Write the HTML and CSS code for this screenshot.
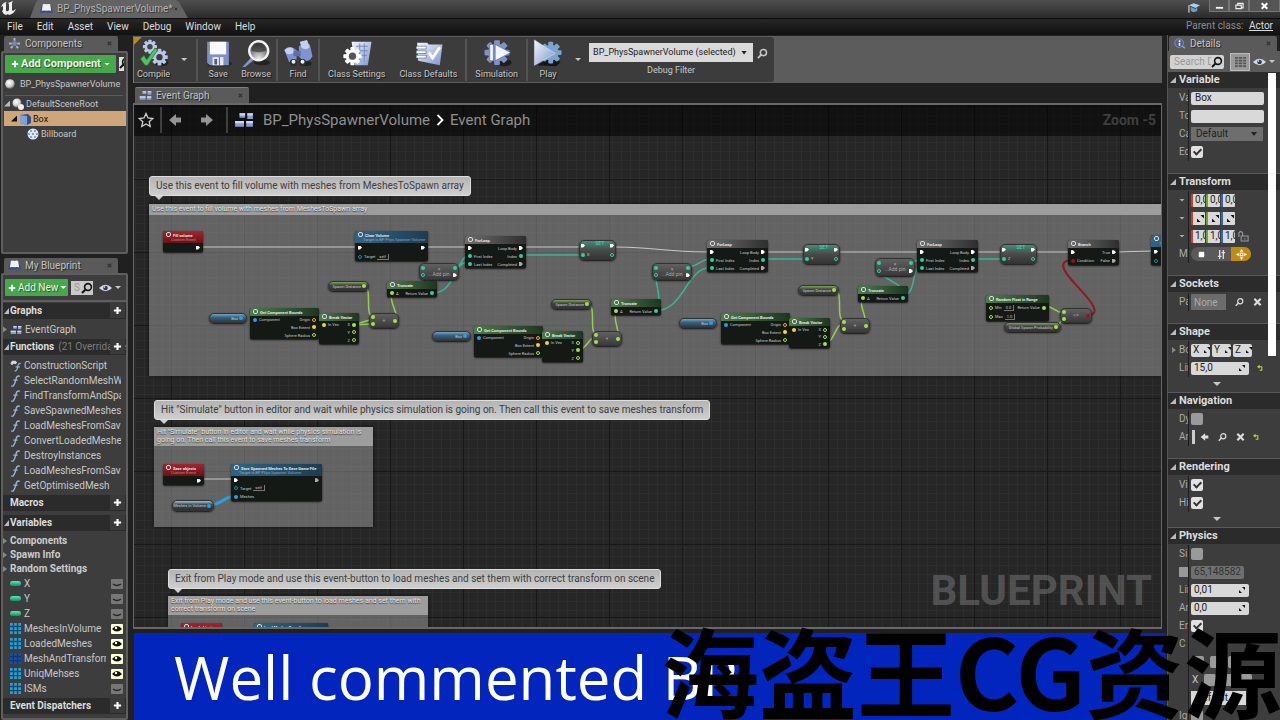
FILE: index.html
```html
<!DOCTYPE html>
<html lang="en">
<head>
  <meta charset="UTF-8" />
  <meta name="viewport" content="width=device-width, initial-scale=1.0" />
  <title>BP_PhysSpawnerVolume</title>
  <link rel="stylesheet" href="styles.css">
</head>
<body>

<svg class="sprite" aria-hidden="true">
  <defs>
    <linearGradient id="steel" x1="0" y1="0" x2="1" y2="1">
      <stop offset="0" stop-color="#f2f5ff"/><stop offset="1" stop-color="#7f95c8"/>
    </linearGradient>
    <radialGradient id="ball" cx=".4" cy=".35" r=".7">
      <stop offset="0" stop-color="#fff"/><stop offset=".6" stop-color="#d0d0d0"/><stop offset="1" stop-color="#555"/>
    </radialGradient>
    <radialGradient id="lens" cx=".5" cy=".9" r=".9">
      <stop offset="0" stop-color="#e8e8e8"/><stop offset="1" stop-color="#2c2c2c"/>
    </radialGradient>
  </defs>
  <symbol id="i-gear" viewBox="-12 -12 24 24">
    <g fill="inherit">
      <rect x="-2.5" y="-11" width="5" height="22" rx="1"/>
      <rect x="-2.5" y="-11" width="5" height="22" rx="1" transform="rotate(45)"/>
      <rect x="-2.5" y="-11" width="5" height="22" rx="1" transform="rotate(90)"/>
      <rect x="-2.5" y="-11" width="5" height="22" rx="1" transform="rotate(135)"/>
      <circle r="8"/>
    </g>
  </symbol>
  <symbol id="i-compile" viewBox="0 0 32 32">
    <ellipse cx="24" cy="26" rx="8" ry="4" fill="#111" opacity=".6"/>
    <g fill="#b9c7ea"><use href="#i-gear" x="3" y="0" width="17" height="17"/><use href="#i-gear" x="12" y="10" width="20" height="20"/></g>
    <circle cx="11.500" cy="8.500" r="3" fill="#444"/><circle cx="22" cy="20" r="3.500" fill="#3c3c3c"/>
    <path d="M1 22l4-4 3 5 9-13 3 2L9 29H6z" fill="#52c15a" stroke="#276e2c" stroke-width=".7"/>
  </symbol>
  <symbol id="i-save" viewBox="0 0 32 32">
    <path d="M4 30h24l4-3-4-3H8z" fill="#111" opacity=".5"/>
    <path d="M4 3h24v26H7l-3-3z" fill="#7d8fc4"/><path d="M7 3h18v14H7z" fill="#fafafa"/>
    <path d="M10 20h12v9H10z" fill="#e7e9f2"/><path d="M12 22h3v6h-3zM17 20h1v9h-1z" fill="#4c5a86"/>
  </symbol>
  <symbol id="i-browse" viewBox="0 0 32 32">
    <ellipse cx="23" cy="26" rx="9" ry="3" fill="#111" opacity=".6"/>
    <path d="M11 20l3 3L4 31l-3 0z" fill="#8296cf"/>
    <circle cx="19" cy="13" r="10.5" fill="url(#lens)" stroke="#f3f3f8" stroke-width="2.6"/>
    <path d="M11 13a8 8 0 0 1 16 0q-8 3-16 0z" fill="#2b2b2b" opacity=".6"/>
  </symbol>
  <symbol id="i-find" viewBox="0 0 32 32">
    <ellipse cx="24" cy="27" rx="7" ry="3" fill="#111" opacity=".6"/>
    <path d="M1 12q4-5 10-2l4 3-1 12q-5 3-8 0zM17 8q5-5 12-2l3 13q-3 6-10 6l-5-6z" fill="#7f94cf"/>
    <path d="M18 3l8-2 3 8q-4 4-9 1zM1 12q5-4 9-2l2 5q-5 3-9 1z" fill="#c4d0f0"/>
    <path d="M11 13h8v6h-8z" fill="#5d70a5"/>
    <circle cx="11" cy="26" r="4" fill="#2c2c2c"/><circle cx="21" cy="26" r="4" fill="#2c2c2c"/><circle cx="11" cy="25" r="2.200" fill="#eee"/><circle cx="21" cy="25" r="2.200" fill="#eee"/>
  </symbol>
  <symbol id="i-settings" viewBox="0 0 32 32">
    <path d="M10 3h22l-4 26H14z" fill="url(#steel)"/>
    <path d="M15 8h13M15 13h13M15 18h12M19 5v20M24 5v20" stroke="#6f86be" stroke-width="1"/>
    <g fill="#fff"><use href="#i-gear" x="0" y="8" width="22" height="22"/></g><circle cx="11" cy="19" r="4" fill="#555"/>
  </symbol>
  <symbol id="i-defaults" viewBox="0 0 32 32">
    <path d="M4 4h11l2 2h15l-3 23-24-5z" fill="url(#steel)"/>
    <path d="M3 8h11v3H3zM3 13h11v3H3zM3 18h11v3H3z" fill="#fff" stroke="#44527c" stroke-width=".6"/>
    <path d="M17 15l4 6 8-12" fill="none" stroke="#fff" stroke-width="3"/>
  </symbol>
  <symbol id="i-sim" viewBox="0 0 32 32">
    <ellipse cx="24" cy="26" rx="8" ry="4" fill="#111" opacity=".7"/>
    <g fill="#7f93c6"><use href="#i-gear" x="1" y="0" width="30" height="30"/></g>
    <path d="M8 6h4v18H8zM14 6l17 9-17 9z" fill="#f2f5ff" stroke="#53648f" stroke-width=".7"/>
  </symbol>
  <symbol id="i-play" viewBox="0 0 32 32">
    <path d="M4 29l14-8 12 4-5 5z" fill="#0b0b0b" opacity=".8"/>
    <g fill="#7aa5cf"><use href="#i-gear" x="6" y="1" width="26" height="28"/></g>
    <path d="M1 1l23 15L1 29z" fill="url(#steel)" stroke="#dfe6fb" stroke-width=".6"/>
  </symbol>
  <symbol id="i-mag" viewBox="0 0 12 12">
    <path d="M1 11l4-4" stroke="currentColor" stroke-width="2"/><circle cx="7" cy="5" r="3.4" fill="none" stroke="currentColor" stroke-width="1.6"/>
  </symbol>
  <symbol id="i-graph" viewBox="0 0 18 14">
    <path d="M5 1h5v4H5zM12 1h5v5h-5zM1 8h8v5H1zM11 8h6v5h-6z" fill="#8d9dd0"/><path d="M5 1h5v2H5zM12 1h5v2h-5zM1 8h8v2H1zM11 8h6v2h-6z" fill="#ccd6f5"/>
  </symbol>
  <symbol id="i-book" viewBox="0 0 14 12">
    <path d="M0 10L2 2h10l2 8z" fill="#2f4f92"/><path d="M2 8l1-7q2-1 4 0 2-1 4 0l1 7q-3-1-5 0-2-1-5 0z" fill="#f1f1f1"/>
  </symbol>
  <symbol id="i-comp" viewBox="0 0 14 12">
    <path d="M7 0v3M1 6h3M10 6h3M3 11l2-2M11 11l-2-2" stroke="#a8b7cf" stroke-width="2"/><circle cx="7" cy="6" r="2.6" fill="#6f8bc0"/>
  </symbol>
  <symbol id="i-info" viewBox="0 0 14 14">
    <circle cx="6.500" cy="6.500" r="5.500" fill="#4c5d92" stroke="#8c9bc5"/><path d="M6 6h2v4H6zM6 3h2v2H6z" fill="#fff"/><path d="M10 10l4 3" stroke="#8c9bc5" stroke-width="2"/>
  </symbol>
  <symbol id="i-eye" viewBox="0 0 14 8">
    <path d="M0 4q7-7 14 0-7 7-14 0z" fill="#d7d9e4"/><circle cx="7" cy="4" r="2.500" fill="#2d3a5c"/><circle cx="6" cy="3" r=".8" fill="#fff"/>
  </symbol>
  <symbol id="i-func" viewBox="0 0 12 14">
    <path d="M11 1.500Q7.500 0 6.500 5T3.500 12.500Q2.500 13.500 1 12.500M3.500 6h5" fill="none" stroke="#9db6d8" stroke-width="1.600"/>
  </symbol>
  <symbol id="i-construct" viewBox="0 0 12 14">
    <path d="M0 4l2-3h4l2 2-2 2-2-1-2 2z" fill="#d3d9e6"/><path d="M12 4Q9 3.500 8.500 8T5 13M6 8h5" fill="none" stroke="#9db6d8" stroke-width="1.300"/>
  </symbol>
  <symbol id="i-grid" viewBox="0 0 12 12">
    <path d="M0 0h3v3H0zM4.500 0h3v3h-3zM9 0h3v3H9zM0 4.500h3v3H0zM4.500 4.500h3v3h-3zM9 4.500h3v3H9zM0 9h3v3H0zM4.500 9h3v3h-3zM9 9h3v3H9z" fill="currentColor"/>
  </symbol>
  <symbol id="i-rows" viewBox="0 0 12 12">
    <path d="M0 1h3v2H0zM4 1h4v2H4zM9 1h3v2H9zM0 4h3v2H0zM4 4h4v2H4zM9 4h3v2H9zM0 7h3v2H0zM4 7h4v2H4zM9 7h3v2H9zM0 10h3v2H0zM4 10h4v2H4zM9 10h3v2H9z" fill="currentColor"/>
  </symbol>
  <symbol id="i-closed" viewBox="0 0 12 10"><path d="M2 5q4 3 8 0" fill="none" stroke="#252525" stroke-width="1.300"/></symbol>
  <symbol id="i-open" viewBox="0 0 12 10"><path d="M1 5q5-6 10 0-5 5-10 0z" fill="#111"/><circle cx="5" cy="4" r="1.200" fill="#ffffcf"/></symbol>
  <symbol id="i-x" viewBox="0 0 10 10"><path d="M1.500 1.500l7 7M8.500 1.500l-7 7" stroke="currentColor" stroke-width="2.400"/></symbol>
  <symbol id="i-plus" viewBox="0 0 10 10"><path d="M5 1v8M1 5h8" stroke="currentColor" stroke-width="2.400"/></symbol>
  <symbol id="i-arrow" viewBox="0 0 14 14"><path d="M1 7l7-6v3.500h5v5H8V13z" fill="currentColor"/></symbol>
  <symbol id="i-star" viewBox="0 0 16 16"><path d="M8 1.500l2 4.500 4.800.5-3.600 3.200 1 4.800L8 12l-4.200 2.500 1-4.800L1.200 6.500 6 6z" fill="none" stroke="#cfcfcf" stroke-width="1.300"/></symbol>
  <symbol id="i-reset" viewBox="0 0 8 8"><path d="M1 2h4.500v4H3M3 .5L1 2l2 1.500" fill="none" stroke="#c3cf3a" stroke-width="1.200"/></symbol>
  <symbol id="i-spin" viewBox="0 0 8 8"><path d="M4 0h4v4zM0 4v4h4z" fill="#111"/></symbol>
  <symbol id="i-lock" viewBox="0 0 12 12"><path d="M1 7V2.500Q3 0 5 2.500V6" fill="none" stroke="#999" stroke-width="1.200"/><path d="M3.500 6H11v5.500H3.500z" fill="none" stroke="#999" stroke-width="1.200"/><path d="M7 8h1v2H7z" fill="#999"/></symbol>
</svg>

<header class="titlebar">
  <svg class="unreal" viewBox="0 0 18 16" aria-hidden="true"><path d="M1 7q2-5 6-5-2 1-1 2v6q0 2 2 1l1-1V4L8 3l5-2-1 2v7l1 1 3-2q-2 5-7 6l-1-1-2 1Q3 14 2 11l1-1V6z" fill="#eee"/></svg>
  <div class="doc-tab"><svg class="ico-book"><use href="#i-book"/></svg><span>BP_PhysSpawnerVolume*</span><svg class="tab-x"><use href="#i-x"/></svg></div>
  <svg class="hat" viewBox="0 0 14 12" aria-hidden="true"><path d="M1 3l5-2 7 2-5 3z" fill="#a8cdf0"/><path d="M3 5v4q3 3 7 0V5L8 7z" fill="#6b9ccc"/><path d="M1 3v8" stroke="#bbb" stroke-width="1.500"/></svg>
  <div class="win-btns">
    <button aria-label="Minimize"><svg viewBox="0 0 10 8"><path d="M1 6h8" stroke="#fff" stroke-width="2"/></svg></button>
    <button aria-label="Restore"><svg viewBox="0 0 10 8"><path d="M3 3V1h6v5H7M1 3h6v4H1z" fill="none" stroke="#eee" stroke-width="1.300"/></svg></button>
    <button aria-label="Close"><svg viewBox="0 0 10 10"><use href="#i-x"/></svg></button>
  </div>
</header>

<nav class="menubar">
  <button>File</button><button>Edit</button><button>Asset</button><button>View</button><button>Debug</button><button>Window</button><button>Help</button>
  <span class="parent-class">Parent class: <a href="#">Actor</a></span>
</nav>

<div class="workspace">

  <aside class="left">
    <div class="tab"><svg class="tab-ico"><use href="#i-comp"/></svg><span>Components</span><svg class="tab-x"><use href="#i-x"/></svg></div>
    <section class="panel components">
      <div class="add-row">
        <button class="btn-green btn-add"><svg class="plus"><use href="#i-plus"/></svg>Add Component<i class="caret"></i></button>
        <div class="search-stub"><svg><use href="#i-mag"/></svg></div>
      </div>
      <div class="tree-root"><svg viewBox="0 0 10 10"><circle cx="5" cy="5" r="4.800" fill="url(#ball)"/></svg>BP_PhysSpawnerVolume</div>
      <ul class="tree">
        <li><i class="tri"></i><svg viewBox="0 0 12 12"><circle cx="5" cy="5" r="4.500" fill="url(#ball)"/><circle cx="9" cy="9" r="3" fill="#eee"/></svg>DefaultSceneRoot</li>
        <li class="lvl1 selected"><i class="tri"></i><svg viewBox="0 0 12 12"><path d="M1 2l8-1 3 3v6l-4 2-7-2z" fill="#35507f"/><path d="M1 2l7 1v9l-7-2z" fill="#7ea0dc"/></svg>Box</li>
        <li class="lvl2"><svg viewBox="0 0 12 12"><circle cx="6" cy="6" r="5.500" fill="#dfe9f5"/><path d="M3 2h2v2H3zM7 2h2v2H7zM1 5h2v2H1zM5 5h2v2H5zM9 5h2v2H9zM3 8h2v2H3zM7 8h2v2H7z" fill="#7ea5d3"/></svg>Billboard</li>
      </ul>
    </section>

    <div class="tab tab-second"><svg class="tab-ico"><use href="#i-book"/></svg><span>My Blueprint</span><svg class="tab-x"><use href="#i-x"/></svg></div>
    <section class="panel my-blueprint">
      <div class="add-row bp-tools">
        <button class="btn-green"><svg class="plus"><use href="#i-plus"/></svg>Add New<i class="caret"></i></button>
        <div class="mini-search"><span>S</span><svg><use href="#i-mag"/></svg></div>
        <svg class="eye"><use href="#i-eye"/></svg><i class="caret"></i>
      </div>
      <h3 class="cat"><i class="tri"></i>Graphs<button aria-label="Add graph"><svg><use href="#i-plus"/></svg></button></h3>
      <ul class="items graphs">
        <li><i class="tri-r"></i><svg><use href="#i-graph"/></svg><span>EventGraph</span></li>
      </ul>
      <h3 class="cat"><i class="tri"></i>Functions<small>(21 Overridable)</small><button aria-label="Add function"><svg><use href="#i-plus"/></svg></button></h3>
      <ul class="items">
        <li><svg><use href="#i-construct"/></svg><span>ConstructionScript</span></li>
        <li><svg><use href="#i-func"/></svg><span>SelectRandomMeshW</span></li>
        <li><svg><use href="#i-func"/></svg><span>FindTransformAndSpa</span></li>
        <li><svg><use href="#i-func"/></svg><span>SaveSpawnedMeshes</span></li>
        <li><svg><use href="#i-func"/></svg><span>LoadMeshesFromSav</span></li>
        <li><svg><use href="#i-func"/></svg><span>ConvertLoadedMeshe</span></li>
        <li><svg><use href="#i-func"/></svg><span>DestroyInstances</span></li>
        <li><svg><use href="#i-func"/></svg><span>LoadMeshesFromSav</span></li>
        <li><svg><use href="#i-func"/></svg><span>GetOptimisedMesh</span></li>
      </ul>
      <h3 class="cat">Macros<button aria-label="Add macro"><svg><use href="#i-plus"/></svg></button></h3>
      <h3 class="cat"><i class="tri"></i>Variables<button aria-label="Add variable"><svg><use href="#i-plus"/></svg></button></h3>
      <ul class="groups">
        <li><i class="tri-r"></i>Components</li>
        <li><i class="tri-r"></i>Spawn Info</li>
        <li><i class="tri-r"></i>Random Settings</li>
      </ul>
      <ul class="items vars">
        <li><i class="capsule"></i><span>X</span><svg class="vis"><use href="#i-closed"/></svg></li>
        <li><i class="capsule"></i><span>Y</span><svg class="vis"><use href="#i-closed"/></svg></li>
        <li><i class="capsule"></i><span>Z</span><svg class="vis"><use href="#i-closed"/></svg></li>
        <li><svg class="array"><use href="#i-grid"/></svg><span>MeshesInVolume</span><svg class="vis on"><use href="#i-open"/></svg></li>
        <li><svg class="array"><use href="#i-grid"/></svg><span>LoadedMeshes</span><svg class="vis on"><use href="#i-open"/></svg></li>
        <li><svg class="array deep"><use href="#i-grid"/></svg><span>MeshAndTransform</span><svg class="vis on"><use href="#i-open"/></svg></li>
        <li><svg class="array"><use href="#i-grid"/></svg><span>UniqMehses</span><svg class="vis on"><use href="#i-open"/></svg></li>
        <li><svg class="array"><use href="#i-grid"/></svg><span>ISMs</span><svg class="vis"><use href="#i-closed"/></svg></li>
      </ul>
      <h3 class="cat">Event Dispatchers<button aria-label="Add dispatcher"><svg><use href="#i-plus"/></svg></button></h3>
    </section>
  </aside>

  <main class="center">
    <div class="toolbar">
      <div class="tools">
        <button class="tool"><svg><use href="#i-compile"/></svg>Compile</button>
        <i class="caret drop"></i>
        <i class="sep"></i>
        <button class="tool"><svg><use href="#i-save"/></svg>Save</button>
        <button class="tool"><svg><use href="#i-browse"/></svg>Browse</button>
        <i class="sep"></i>
        <button class="tool"><svg><use href="#i-find"/></svg>Find</button>
        <i class="sep"></i>
        <button class="tool tool-wide"><svg><use href="#i-settings"/></svg>Class Settings</button>
        <button class="tool tool-wide"><svg><use href="#i-defaults"/></svg>Class Defaults</button>
        <i class="sep"></i>
        <button class="tool tool-wide"><svg><use href="#i-sim"/></svg>Simulation</button>
        <i class="sep"></i>
        <button class="tool"><svg><use href="#i-play"/></svg>Play</button>
        <i class="caret drop"></i>
        <div class="debug">
          <div class="debug-pick"><select id="debug-filter"><option>BP_PhysSpawnerVolume (selected)</option></select></div>
          <label for="debug-filter">Debug Filter</label>
        </div>
        <svg class="debug-mag"><use href="#i-mag"/></svg>
      </div>
    </div>

    <div class="tab graph-tab"><svg class="tab-ico"><use href="#i-graph"/></svg><span>Event Graph</span><svg class="tab-x"><use href="#i-x"/></svg></div>
    <section class="graph">
      <div class="crumbs">
        <svg class="star"><use href="#i-star"/></svg>
        <i class="bar"></i>
        <svg class="nav-arrow"><use href="#i-arrow"/></svg>
        <svg class="nav-arrow fwd"><use href="#i-arrow"/></svg>
        <i class="bar"></i>
        <svg class="crumb-ico"><use href="#i-graph"/></svg>
        <span>BP_PhysSpawnerVolume</span>
        <svg class="chev" viewBox="0 0 8 12"><path d="M1.500 1l5 5-5 5" fill="none" stroke="#fff" stroke-width="1.800"/></svg>
        <span>Event Graph</span>
        <b class="zoom">Zoom -5</b>
      </div>
      <div class="canvas" id="canvas"></div>
      <b class="stamp">BLUEPRINT</b>
    </section>

    <div class="banner">Well commented BP</div>
  </main>

  <aside class="right">
    <div class="tab"><svg class="tab-ico"><use href="#i-info"/></svg><span>Details</span><svg class="tab-x"><use href="#i-x"/></svg></div>
    <div class="details">
      <div class="search-row">
        <div class="search"><input type="text" placeholder="Search Details" aria-label="Search Details"><svg><use href="#i-mag"/></svg></div>
        <button class="matrix" aria-label="Property matrix"><svg><use href="#i-rows"/></svg></button>
        <svg class="eye"><use href="#i-eye"/></svg><i class="caret"></i>
      </div>

      <section class="props">
        <h3><i class="tri"></i>Variable</h3>
        <div class="row"><label for="v-name">Va</label><input class="wide" id="v-name" type="text" value="Box"></div>
        <div class="row"><label for="v-tip">To</label><input class="wide" id="v-tip" type="text"></div>
        <div class="row"><label for="v-cat">Ca</label><div class="pick"><select id="v-cat"><option>Default</option></select></div></div>
        <div class="row"><label for="v-ed">Ed</label><input id="v-ed" type="checkbox" checked></div>
      </section>
      <section class="props">
        <h3><i class="tri"></i>Transform</h3>
        <div class="row"><label><i class="caret"></i></label><div class="xyz"><input value="0,0" aria-label="Location X"><input value="0,0" aria-label="Location Y"><input value="0,0" aria-label="Location Z"></div></div>
        <div class="row"><label><i class="caret"></i></label><div class="xyz rot"><span><svg><use href="#i-spin"/></svg></span><span><svg><use href="#i-spin"/></svg></span><span><svg><use href="#i-spin"/></svg></span></div></div>
        <div class="row"><label><i class="caret"></i></label><div class="xyz"><input value="1,0" aria-label="Scale X"><input value="1,0" aria-label="Scale Y"><input value="1,0" aria-label="Scale Z"></div><svg class="lock"><use href="#i-lock"/></svg></div>
        <div class="row"><label>M</label>
          <div class="mobility">
            <button aria-label="Static"><svg viewBox="0 0 12 12"><rect x="3" y="3" width="6" height="6" rx="1" fill="#fff"/></svg></button>
            <button aria-label="Stationary"><svg viewBox="0 0 12 12"><path d="M4 1v10M8 1v10M2 8h4M6 4h4" stroke="#ddd" stroke-width="1.500"/></svg></button>
            <button class="on" aria-label="Movable"><svg viewBox="0 0 12 12"><path d="M6 0l2 3H4zM6 12l2-3H4zM0 6l3-2v4zM12 6L9 4v4z" fill="#fff"/><rect x="4.500" y="4.500" width="3" height="3" fill="none" stroke="#fff"/></svg></button>
          </div>
        </div>
      </section>
      <section class="props">
        <h3><i class="tri"></i>Sockets</h3>
        <div class="row"><label for="s-par">Pa</label><input class="none" id="s-par" type="text" value="None" disabled><svg class="act"><use href="#i-mag"/></svg><svg class="act"><use href="#i-x"/></svg></div>
      </section>
      <section class="props more">
        <h3><i class="tri"></i>Shape</h3>
        <div class="row"><i class="tri-r"></i><label>Bo</label><div class="ext"><span>X<svg><use href="#i-spin"/></svg></span><span>Y<svg><use href="#i-spin"/></svg></span><span>Z<svg><use href="#i-spin"/></svg></span></div></div>
        <div class="row"><label for="s-line">Lin</label><div class="num"><input id="s-line" type="text" value="15,0"><svg><use href="#i-spin"/></svg></div><svg class="reset"><use href="#i-reset"/></svg></div>
        <div class="expander"><i class="caret"></i></div>
      </section>
      <section class="props">
        <h3><i class="tri"></i>Navigation</h3>
        <div class="row"><label for="n-dyn">Dy</label><input id="n-dyn" type="checkbox"></div>
        <div class="row"><label>Ar</label><i class="sliver"></i><svg class="act tight"><use href="#i-arrow"/></svg><svg class="act"><use href="#i-mag"/></svg><svg class="act"><use href="#i-x"/></svg><svg class="reset"><use href="#i-reset"/></svg></div>
      </section>
      <section class="props more">
        <h3><i class="tri"></i>Rendering</h3>
        <div class="row"><label for="r-vis">Vi</label><input id="r-vis" type="checkbox" checked></div>
        <div class="row"><label for="r-hid">Hi</label><input id="r-hid" type="checkbox" checked></div>
        <div class="expander"><i class="caret"></i></div>
      </section>
      <section class="props">
        <h3><i class="tri"></i>Physics</h3>
        <div class="row"><label for="p-sim">Si</label><input id="p-sim" type="checkbox"></div>
        <div class="row"><label><i class="half"></i></label><div class="num off"><input type="text" value="65,148582" aria-label="Mass" disabled></div></div>
        <div class="row"><label for="p-lin">Lin</label><div class="num"><input id="p-lin" type="text" value="0,01"><svg><use href="#i-spin"/></svg></div></div>
        <div class="row"><label for="p-ang">Ar</label><div class="num"><input id="p-ang" type="text" value="0,0"><svg><use href="#i-spin"/></svg></div></div>
        <div class="row"><label for="p-en">En</label><input id="p-en" type="checkbox" checked></div>
        <div class="row"><label>C</label></div>
        <div class="row locks"><label></label><input type="checkbox" aria-label="Lock position X"><input type="checkbox" aria-label="Lock position Y"><input type="checkbox" aria-label="Lock position Z"></div>
        <div class="row locks"><label></label>X<input type="checkbox" aria-label="Lock rotation X"><input type="checkbox" aria-label="Lock rotation Y"><input type="checkbox" aria-label="Lock rotation Z"></div>
        <div class="row"><label></label><div class="pick light"><select aria-label="Mode"><option>Default</option></select></div></div>
        <div class="row"><label for="p-ig">Ig</label><input id="p-ig" type="checkbox"></div>
      </section>
      <i class="scroll-thumb"></i>
    </div>
  </aside>
</div>

<div class="watermark" lang="zh">海盗王CG资源</div>

<script src="graph.js"></script>
</body>
</html>
```

FILE: styles.css
```css
:root {
  --panel: #3d3d3d;
  --head: #2b2b2b;
  --frame: #5e5e5e;
  --bg: #202020;
  --text: #c8c8c8;
  --field: #d9d9d9;
  --green: #47a84b;
  --teal: #2fcf9f;
  --lime: #a4e04c;
  --blue: #2a9fdd;
}

* {
  margin: 0;
  padding: 0;
  box-sizing: border-box;
}

body {
  height: 100vh;
  overflow: hidden;
  display: flex;
  flex-direction: column;
  position: relative;
  background: var(--bg);
  color: var(--text);
  font: 10px/14px Roboto, sans-serif;
}

button, input, select {
  font: inherit;
  color: inherit;
  border: none;
  background: none;
}

ul { list-style: none; }
svg { flex: none; display: block; overflow: visible; }
i { flex: none; }
a { color: #eee; }
.sprite { position: absolute; width: 0; height: 0; }

.caret {
  width: 6px;
  height: 3px;
  background: currentColor;
  clip-path: polygon(0 0, 100% 0, 50% 100%);
}

.tri {
  width: 6px;
  height: 6px;
  background: #bbb;
  clip-path: polygon(100% 0, 100% 100%, 0 100%);
}

.tri-r {
  width: 4px;
  height: 6px;
  background: #888;
  clip-path: polygon(0 0, 100% 50%, 0 100%);
}

/* title bar and menu */
.titlebar {
  flex: none;
  height: 19px;
  display: flex;
  align-items: flex-start;
  background: linear-gradient(#4e4e4e, #2b2b2b);
  border-bottom: 1px solid #0c0c0c;
}

.unreal { width: 18px; height: 16px; }

.doc-tab {
  display: flex;
  align-items: center;
  width: 158px;
  height: 18px;
  margin-left: 12px;
  padding: 0 10px;
  background: #636363;
  color: #b4b4b4;
  clip-path: polygon(6px 2px, 8px 0, 146px 0, 149px 2px, 158px 100%, 0 100%);
  text-shadow: 1px 1px 1px #333;
}

.ico-book { width: 13px; height: 12px; margin-right: 4px; }
.tab-x { width: 5px; height: 5px; margin-left: auto; color: #333; }
.doc-tab .tab-x { width: 4px; height: 4px; margin-left: 1px; }
.hat { width: 13px; height: 12px; margin: 2px 8px 0 auto; }

.win-btns { display: flex; }

.win-btns button {
  width: 20px;
  height: 12px;
  display: flex;
  align-items: center;
  justify-content: center;
  background: #555;
  border: 1px solid #777;
  border-top: none;
  color: #fff;
}

.win-btns button:last-child { width: 31px; }
.win-btns svg { width: 9px; height: 8px; }

.menubar {
  flex: none;
  height: 16px;
  display: flex;
  gap: 14px;
  padding: 0 7px;
  background: linear-gradient(#262626, #111);
}

.menubar button { color: #ddd; }
.parent-class { margin-left: auto; color: #8c8c8c; }
.parent-class a { margin-left: 3px; color: #ddd; }

.workspace {
  flex: 1;
  min-height: 0;
  display: grid;
  grid-template-columns: 128px minmax(0, 1fr) 113px;
  column-gap: 5px;
}

/* tabs */
.tab {
  flex: none;
  height: 15px;
  width: 114px;
  margin-left: 4px;
  padding: 0 6px 0 4px;
  display: flex;
  align-items: center;
  background: #5a5a5a;
  color: #c4c4c4;
  border-radius: 2px 2px 0 0;
  line-height: 13px;
  text-shadow: 1px 1px 1px #222;
}

.tab-ico { width: 13px; height: 11px; margin-right: 4px; }

.left, .right, .center {
  min-height: 0;
  min-width: 0;
  display: flex;
  flex-direction: column;
  padding-top: 1px;
}

.left .tab-ico { margin-right: 4px; }

.panel {
  margin-left: 1px;
  border: 2px solid var(--frame);
  background: var(--panel);
  border-radius: 2px;
}

.components { height: 203px; flex: none; font-size: 9px; }
.tab-second { margin-top: 4px; }

.add-row {
  display: flex;
  align-items: center;
  gap: 3px;
  padding: 2px;
}

.btn-green {
  display: flex;
  align-items: center;
  height: 18px;
  padding: 0 3px;
  gap: 2px;
  background: var(--green);
  color: #f0f0f0;
  border-radius: 1px;
  white-space: nowrap;
  text-shadow: 1px 1px 1px #1d5a20;
}

.btn-green .caret { margin-left: auto; }
.btn-add { width: 112px; padding: 0 6px; font-size: 11px; font-weight: bold; }
.plus { width: 8px; height: 8px; }
.search-stub { width: 5px; height: 14px; overflow: hidden; background: #ddd; color: #111; }
.search-stub svg { width: 12px; height: 12px; }

.tree-root {
  display: flex;
  align-items: center;
  gap: 5px;
  height: 21px;
  margin: 0 3px 0 2px;
  padding-bottom: 2px;
  border-bottom: 1px solid #5b5b5b;
  white-space: nowrap;
}

.tree-root svg { width: 10px; height: 10px; }
.tree { padding: 0 0 0 1px; }

.tree li {
  display: flex;
  align-items: center;
  gap: 2px;
  height: 15px;
}

.tree svg { width: 12px; height: 12px; }
.tree .lvl1 { padding-left: 7px; }
.tree .lvl2 { padding-left: 23px; }
.tree .selected { background: #cda77a; color: #111; }
.selected .tri { background: #111; }

.my-blueprint { flex: 1; min-height: 0; overflow: hidden; }
.bp-tools { height: 27px; padding: 0 2px; border-bottom: 2px solid var(--frame); }
.bp-tools .btn-green { width: 63px; height: 17px; }
.eye { width: 13px; height: 8px; }

.mini-search {
  width: 22px;
  height: 14px;
  display: flex;
  align-items: center;
  justify-content: space-between;
  padding-left: 3px;
  background: #c9c9c9;
  color: #111;
}

.mini-search span { color: #999; }
.mini-search svg { width: 12px; height: 12px; }
.bp-tools .eye { margin-left: 3px; }

.cat {
  display: flex;
  align-items: center;
  height: 16px;
  margin: 1px 0 3px;
  padding: 0 1px 0 7px;
  background: var(--head);
  color: #ddd;
  font-size: 10px;
  white-space: nowrap;
  position: relative;
}

.items + .cat { margin-top: 2px; }
.cat + .cat { margin-top: 4px; }
.cat .tri { width: 5px; margin-left: -6px; margin-right: 1px; }
.cat small { margin-left: 4px; color: #7d7d7d; font-size: 10px; font-weight: normal; }

.cat button {
  position: absolute;
  right: 1px;
  top: 0;
  width: 15px;
  height: 15px;
  display: flex;
  align-items: center;
  justify-content: center;
  background: #3a3a3a;
  color: #fff;
}

.cat button svg { width: 9px; height: 9px; }

.items li {
  display: flex;
  align-items: center;
  height: 15px;
  padding-left: 7px;
}

.items svg { width: 11px; height: 12px; margin-right: 3px; }
.items span { width: 97px; overflow: hidden; white-space: nowrap; }
.graphs li { padding-left: 0; }
.graphs .tri-r { margin-right: 3px; }
.graphs svg { width: 12px; }
.groups li { height: 14px; display: flex; align-items: center; gap: 3px; font-weight: bold; color: #ccc; }
.vars span { width: 82px; }

.capsule {
  width: 11px;
  height: 5px;
  margin-right: 3px;
  border-radius: 3px;
  background: linear-gradient(#5be8b8, #0d8f68);
}

.items .array { height: 11px; color: #2a9fd0; background: #174a66; }
.items .deep { color: #1450a8; background: #123672; }
.items .vis { width: 12px; height: 10px; margin: 0 0 0 5px; background: #777; border-radius: 1px; }
.items .on { background: #ffffcf; }

/* toolbar */
.toolbar {
  flex: none;
  height: 47px;
  padding: 1px 0;
  background: #5c5c5c;
  border-left: 1px solid #777;
}

.tools {
  display: flex;
  align-items: center;
  width: 640px;
  height: 45px;
  background: linear-gradient(135deg, #b98a1c 5px, #3c3c3c 6px);
  border-radius: 0 3px 3px 0;
  font-size: 9px;
}

.tool {
  display: flex;
  flex-direction: column;
  align-items: center;
  min-width: 38px;
  padding: 0 3px;
  white-space: nowrap;
  text-shadow: 1px 1px 1px #111;
  line-height: 13px;
}

.tool svg { width: 30px; height: 29px; }
.tool-wide { padding: 0 7px; }
.drop { margin: 0 8px; }
.sep { width: 2px; height: 42px; background: #545454; margin: 0 1px; }

.debug {
  display: flex;
  flex-direction: column;
  align-items: center;
  gap: 1px;
}

.debug-pick { position: relative; }

.debug select {
  appearance: none;
  display: block;
  width: 164px;
  height: 19px;
  padding-left: 4px;
  background: #d9d9d9;
  color: #1a1a1a;
}

.debug-pick::after, .pick::after {
  content: '';
  position: absolute;
  right: 6px;
  top: 8px;
  width: 6px;
  height: 4px;
  background: #222;
  clip-path: polygon(0 0, 100% 0, 50% 100%);
}

.debug-mag { width: 11px; height: 11px; margin: -12px 0 0 4px; }

/* graph */
.graph-tab {
  margin: 4px 0 0 2px;
  height: 16px;
  border-top: 1px solid #95832e;
}

.graph {
  flex: 1;
  min-height: 0;
  position: relative;
  overflow: hidden;
  border: 2px solid #686868;
  border-left-width: 1px;
  border-right-width: 1px;
  background-color: #262626;
  background-image:
    linear-gradient(90deg, #181818 1px, transparent 1px),
    linear-gradient(#181818 1px, transparent 1px),
    linear-gradient(90deg, #2d2d2d 1px, transparent 1px),
    linear-gradient(#2d2d2d 1px, transparent 1px);
  background-size: 73px 73px, 73px 73px, 9px 9px, 9px 9px;
  background-position: 37px 0, 0 1px, 1px 0, 0 1px;
}

.crumbs {
  position: relative;
  z-index: 2;
  height: 31px;
  display: flex;
  align-items: center;
  gap: 6px;
  padding: 0 5px 2px 4px;
  background: rgba(0, 0, 0, 0.55);
  color: #8f8f8f;
  font-size: 15px;
}

.star { width: 16px; height: 16px; }
.bar { width: 2px; height: 26px; background: #3f3f3f; }
.nav-arrow { width: 14px; height: 16px; color: #949494; margin-right: 6px; }
.fwd { transform: scaleX(-1); margin: 0 6px; }
.crumb-ico { width: 20px; height: 16px; margin: 0 3px 0 0; }
.chev { width: 8px; height: 12px; }
.zoom { margin-left: auto; font-size: 14px; color: #3f3f3f; }

.canvas { position: absolute; left: 0; top: 0; }
.wires { position: absolute; left: 0; top: 0; width: 1028px; height: 522px; fill: none; }
.w-exec { stroke: #c9c9c9; stroke-width: 1; }
.w-int { stroke: #36b793; stroke-width: 1.500; }
.w-float { stroke: #93cf4a; stroke-width: 1.500; }
.w-bool { stroke: #8d1a20; stroke-width: 2; }
.w-obj { stroke: #2a9fdd; stroke-width: 3; }

.bubble {
  position: absolute;
  height: 20px;
  padding: 0 6px;
  border: 1px solid #dedede;
  border-radius: 3px;
  background: linear-gradient(#b4b4b4, #cfcfcf);
  color: #3c3c3c;
  line-height: 18px;
  white-space: nowrap;
}

.bubble::after {
  content: '';
  position: absolute;
  left: 5px;
  top: 19px;
  border: 4px solid transparent;
  border-top-color: #d0d0d0;
}

.comment {
  position: absolute;
  background: rgba(150, 150, 150, 0.55);
  box-shadow: 0 0 3px #111;
}

.comment p {
  padding: 1px 3px 2px;
  background: #9d9d9d;
  color: #e4e4e4;
  font-size: 7px;
  line-height: 8px;
  text-shadow: 0 1px 1px #333;
}

.node {
  position: absolute;
  display: flex;
  flex-direction: column;
  border-radius: 2px;
  overflow: hidden;
  background: #141916;
  box-shadow: 0 1px 2px #111;
  color: #c9c9c9;
  font-size: 4px;
  line-height: 5px;
  white-space: nowrap;
}

.node-head {
  padding: 1px 2px 1px 3px;
  font-weight: bold;
  color: #e8e8e8;
  background: linear-gradient(90deg, #6e6e6e, #2e2e2e);
}

.node-head::before {
  content: '';
  display: inline-block;
  width: 3px;
  height: 3px;
  margin-right: 2px;
  border: 1px solid #ddd;
  border-radius: 2px;
}

.node-head small { display: block; padding-left: 5px; font-size: 4px; line-height: 4px; font-weight: normal; opacity: 0.5; }
.red .node-head { background: linear-gradient(#a3262c, #6b1015); }
.blue .node-head { background: linear-gradient(100deg, #2e6688, #1d3b50); }
.green .node-head { background: linear-gradient(90deg, #4c7d4c, #1d3520); }

.node-body { flex: 1; display: flex; justify-content: space-between; padding: 0 3px; }
.pins { display: flex; flex-direction: column; justify-content: space-around; }
.pins span { display: flex; align-items: center; gap: 2px; height: 5px; }
.pins.out span { flex-direction: row-reverse; }
.pins u { text-decoration: none; border: 1px solid #777; border-width: 0 1px 1px 0; padding: 0 2px; }

.pin { width: 4px; height: 4px; border-radius: 2px; background: var(--teal); }
.pin.exec { background: #fff; border-radius: 0; clip-path: polygon(0 0, 50% 0, 100% 50%, 50% 100%, 0 100%); }
.pin.float { background: var(--lime); }
.pin.vec { background: #f5d71c; }
.pin.obj { background: var(--blue); }
.pin.bool { background: #a01018; }
.pin.hollow { background: none; border: 1px solid var(--teal); }
.pin.hollow.exec { border: none; background: #aaa; }
.pin.hollow.float { border-color: var(--lime); }
.pin.hollow.vec { border-color: #f5a81c; }
.pin.hollow.obj { border-color: #168ba0; }

.pill, .op {
  border: 1px solid #333;
  border-radius: 5px;
  background: linear-gradient(#606060, #3a3a3a);
}

.pill .node-body { align-items: center; justify-content: flex-end; }
.pill .pins span { gap: 1px; }
.pill.p-float { background: linear-gradient(#7ea35a, #444 40%, #333); }
.pill.p-obj { background: linear-gradient(#7ba4bd, #356585 40%, #303840); }
.pill.p-arr { background: linear-gradient(#9fc3d8, #3c4c55 40%, #303030); }
.pill.p-arr .node-body, .pill.p-float .node-body { padding: 0 2px; }
.op .node-body { padding: 0 1px; }

.op-label {
  align-self: center;
  text-align: center;
  font-size: 5px;
  color: #aaa;
}

.node.set { background: linear-gradient(#3d8f78, #4a4a4a 50%, #343434); }
.set .op-label { align-self: flex-start; color: #52d8b0; }

.stamp {
  position: absolute;
  right: 9px;
  bottom: 12px;
  font-size: 42px;
  line-height: 48px;
  color: rgba(150, 150, 150, 0.4);
}

.banner {
  flex: none;
  height: 87px;
  margin: 4px -4px 0 1px;
  padding-left: 40px;
  background: #0226bd;
  color: #fff;
  font: 60px/88px "Open Sans", sans-serif;
  white-space: nowrap;
}

.watermark {
  position: absolute;
  left: 661px;
  bottom: -18px;
  color: #000;
  font: bold 98px/140px "Noto Sans CJK SC", sans-serif;
  white-space: nowrap;
}

/* details */
.right { border-left: 1px solid #555; }
.right .tab { width: auto; margin: 0 3px 0 1px; }
.details { flex: 1; min-height: 0; overflow: hidden; position: relative; background: var(--panel); }

.search-row {
  display: flex;
  align-items: center;
  gap: 3px;
  height: 21px;
  padding: 0 2px;
  background: #5a5a5a;
}

.search {
  display: flex;
  align-items: center;
  width: 54px;
  height: 14px;
  padding: 0 1px 0 4px;
  margin-right: 3px;
  background: #d2d2d2;
  color: #111;
  border-radius: 2px;
}

.search input { flex: 1; min-width: 0; width: 34px; }
.search input::placeholder { color: #999; }
.search svg { width: 12px; height: 12px; }
.matrix { width: 20px; height: 18px; background: #999; border: 1px solid #bbb; display: flex; align-items: center; justify-content: center; color: #555; }
.matrix svg { width: 11px; height: 11px; }

.props { padding-bottom: 12px; border-bottom: 1px solid #5a5a5a; }
.props.more { padding-bottom: 0; }

.props h3 {
  display: flex;
  align-items: center;
  gap: 3px;
  height: 16px;
  padding-left: 2px;
  margin-bottom: 1px;
  background: var(--head);
  font-size: 11px;
  color: #ddd;
}

.row { display: flex; align-items: center; height: 18px; position: relative; }

.row label {
  flex: none;
  display: flex;
  align-items: center;
  width: 21px;
  height: 18px;
  padding-left: 11px;
  margin-right: 2px;
  overflow: hidden;
  border-right: 1px solid #1d1d1d;
  color: #aaa;
}

.row > .tri-r { position: absolute; left: 4px; }

.row input[type="checkbox"] {
  appearance: none;
  width: 12px;
  height: 12px;
  border-radius: 2px;
  background: #9a9a9a;
}

.row input[type="checkbox"]:checked { background: #e2e2e2; }

.row input[type="checkbox"]:checked::after {
  content: '';
  display: block;
  width: 3px;
  height: 6px;
  margin: 1px 0 0 4px;
  border: solid #333;
  border-width: 0 2px 2px 0;
  transform: rotate(45deg);
  box-sizing: content-box;
}

.wide { width: 73px; height: 13px; padding-left: 4px; background: var(--field); color: #222; border-radius: 2px; }
.pick { position: relative; }
.pick select { appearance: none; width: 72px; height: 14px; padding-left: 5px; background: #6e6e6e; color: #222; }
.pick::after { top: 5px; }
.pick.light select { width: 55px; background: var(--field); }

.xyz { display: flex; gap: 1px; }
.xyz > * { width: 14px; height: 13px; background: var(--field); color: #222; border-left: 2px solid #c8402c; border-radius: 1px; padding-left: 2px; overflow: hidden; }
.xyz > :nth-child(2) { border-color: #6fa22c; }
.xyz > :nth-child(3) { border-color: #2c66c8; }
.rot svg { width: 7px; height: 7px; margin: 3px 0 0 2px; }
.lock { width: 11px; height: 12px; margin-left: 3px; }

.mobility { display: flex; border-radius: 7px; overflow: hidden; background: #5a5a5a; }
.mobility button { width: 20px; height: 14px; display: flex; align-items: center; justify-content: center; }
.mobility svg { width: 11px; height: 11px; }
.mobility .on { background: #c18a10; }

.none { width: 35px; height: 16px; padding-left: 3px; background: #6c6c6c; color: #aaa; }
.act { width: 9px; height: 10px; margin-left: 9px; color: #ddd; }
.tight { margin-left: 5px; }
.sliver { width: 3px; height: 14px; background: #ccc; margin-left: 1px; }
.reset { width: 7px; height: 7px; margin-left: 8px; }

.ext { display: flex; gap: 2px; }
.ext span { display: flex; align-items: center; justify-content: space-between; width: 19px; height: 13px; padding-left: 2px; background: var(--field); color: #222; border-radius: 2px; }
.ext svg, .num svg { width: 6px; height: 6px; }
.num { display: flex; align-items: center; width: 58px; height: 13px; padding: 0 4px 0 3px; background: var(--field); color: #222; border-radius: 2px; }
.num input { flex: 1; min-width: 0; }
.num.off { width: 53px; padding-right: 1px; background: #707070; color: #333; }
.half { width: 9px; height: 10px; background: #999; }
.expander { display: flex; justify-content: center; height: 15px; padding: 5px 14px 0 0; }
.expander .caret { width: 8px; height: 4px; }
.locks { gap: 6px; }
.locks label { margin-right: -3px; }

.scroll-thumb {
  position: absolute;
  right: 4px;
  top: 22px;
  width: 8px;
  height: 283px;
  background: #fff;
}
```

FILE: graph.js
```js
// pin: "type[!]:label", "!" means nothing is connected
const nodes = [
  { k: 'red', x: 163, y: 230, w: 40, h: 21, t: 'Fill volume', s: 'Custom Event', o: ['exec:'] },
  { k: 'blue', x: 355, y: 230, w: 73, h: 30, t: 'Clear Volume', s: 'Target is BP Phys Spawner Volume', i: ['exec:', 'obj!:Target|self'], o: ['exec:', ''] },
  { k: 'gray', x: 465, y: 235, w: 61, h: 32, t: 'ForLoop', i: ['exec:', 'int:First Index', 'int:Last Index'], o: ['exec:Loop Body', 'int:Index', 'exec!:Completed'] },
  { k: 'op', x: 419, y: 262, w: 40, h: 17, t: '×\n...Add pin', i: ['int:', 'int!:'], o: ['int:', 'exec:'] },
  { k: 'green', x: 387, y: 280, w: 50, h: 16, t: 'Truncate', i: ['float:A'], o: ['int:Return Value'] },
  { k: 'pill p-float', x: 328, y: 280, w: 41, h: 10, o: ['float:Spawn Distance'] },
  { k: 'pill p-obj', x: 209, y: 312, w: 38, h: 10, o: ['obj:Box'] },
  { k: 'green', x: 250, y: 307, w: 69, h: 31, t: 'Get Component Bounds', i: ['obj:Component', '', ''], o: ['vec!:Origin', 'vec:Box Extent', 'float!:Sphere Radius'] },
  { k: 'green', x: 319, y: 312, w: 40, h: 31, t: 'Break Vector', i: ['vec:In Vec', '', ''], o: ['float:X', 'float!:Y', 'float!:Z'] },
  { k: 'op', x: 369, y: 312, w: 30, h: 15, t: '+', i: ['float:', 'float:'], o: ['float:'] },

  { k: 'op set', x: 579, y: 239, w: 37, h: 20, t: 'SET', i: ['exec:', 'int:X'], o: ['exec:', 'int!:'] },
  { k: 'pill p-float', x: 551, y: 298, w: 41, h: 10, o: ['float:Spawn Distance'] },
  { k: 'pill p-obj', x: 432, y: 330, w: 39, h: 10, o: ['obj:Box'] },
  { k: 'green', x: 474, y: 325, w: 69, h: 31, t: 'Get Component Bounds', i: ['obj:Component', '', ''], o: ['vec!:Origin', 'vec:Box Extent', 'float!:Sphere Radius'] },
  { k: 'green', x: 542, y: 330, w: 41, h: 31, t: 'Break Vector', i: ['vec:In Vec', '', ''], o: ['float!:X', 'float:Y', 'float!:Z'] },
  { k: 'op', x: 592, y: 330, w: 30, h: 15, t: '+', i: ['float:', 'float:'], o: ['float:'] },
  { k: 'green', x: 611, y: 298, w: 50, h: 16, t: 'Truncate', i: ['float:A'], o: ['int:Return Value'] },
  { k: 'op', x: 652, y: 262, w: 40, h: 17, t: '×\n...Add pin', i: ['int:', 'int!:'], o: ['int:', 'exec:'] },
  { k: 'gray', x: 707, y: 239, w: 61, h: 32, t: 'ForLoop', i: ['exec:', 'int:First Index', 'int:Last Index'], o: ['exec:Loop Body', 'int:Index', 'exec!:Completed'] },

  { k: 'op set', x: 803, y: 243, w: 37, h: 20, t: 'SET', i: ['exec:', 'int:Y'], o: ['exec:', 'int!:'] },
  { k: 'pill p-float', x: 798, y: 284, w: 41, h: 10, o: ['float:Spawn Distance'] },
  { k: 'pill p-obj', x: 679, y: 317, w: 38, h: 10, o: ['obj:Box'] },
  { k: 'green', x: 721, y: 312, w: 69, h: 31, t: 'Get Component Bounds', i: ['obj:Component', '', ''], o: ['vec!:Origin', 'vec:Box Extent', 'float!:Sphere Radius'] },
  { k: 'green', x: 789, y: 317, w: 41, h: 30, t: 'Break Vector', i: ['vec:In Vec', '', ''], o: ['float!:X', 'float!:Y', 'float:Z'] },
  { k: 'op', x: 840, y: 317, w: 30, h: 15, t: '+', i: ['float:', 'float:'], o: ['float:'] },
  { k: 'green', x: 858, y: 285, w: 50, h: 16, t: 'Truncate', i: ['float:A'], o: ['int:Return Value'] },
  { k: 'op', x: 875, y: 257, w: 40, h: 18, t: '×\n...Add pin', i: ['int:', 'int!:'], o: ['int:', 'exec:'] },
  { k: 'gray', x: 917, y: 239, w: 61, h: 32, t: 'ForLoop', i: ['exec:', 'int:First Index', 'int:Last Index'], o: ['exec:Loop Body', 'int:Index', 'exec!:Completed'] },
  { k: 'op set', x: 1000, y: 243, w: 37, h: 20, t: 'SET', i: ['exec:', 'int:Z'], o: ['exec:', 'int!:'] },

  { k: 'gray', x: 1068, y: 239, w: 51, h: 25, t: 'Branch', i: ['exec:', 'bool:Condition'], o: ['exec:True', 'exec!:False'] },
  { k: 'green', x: 986, y: 294, w: 63, h: 26, t: 'Random Float in Range', i: ['float!:Min|0.0', 'float!:Max|1.0'], o: ['float:Return Value', ''] },
  { k: 'pill p-float', x: 1004, y: 321, w: 57, h: 10, o: ['float:Global Spawn Probability'] },
  { k: 'op', x: 1060, y: 307, w: 32, h: 15, t: '<=', i: ['float:', 'float:'], o: ['bool:'] },
  { k: 'blue', x: 1151, y: 234, w: 60, h: 30, t: 'Spawn', s: 'Target', i: ['exec:', 'obj!:'], o: [] },

  { k: 'red', x: 163, y: 463, w: 41, h: 21, t: 'Save objects', s: 'Custom Event', o: ['exec:'] },
  { k: 'blue', x: 231, y: 463, w: 91, h: 37, t: 'Save Spawned Meshes To Save Game File', s: 'Target is BP Phys Spawner Volume', i: ['exec:', 'obj!:Target|self', 'obj:Meshes'], o: ['exec!:', '', ''] },
  { k: 'pill p-arr', x: 172, y: 499, w: 42, h: 11, o: ['obj:Meshes in Volume'] },

  { k: 'red', x: 181, y: 622, w: 41, h: 21, t: 'Load objects', s: 'Custom Event', o: ['exec:'] },
  { k: 'blue', x: 254, y: 622, w: 74, h: 30, t: 'Load Meshes Transform', s: 'Target', i: ['exec:'], o: ['exec:'] },
];

const comments = [
  { x: 149, y: 203, w: 1020, h: 172, by: 175, t: 'Use this event to fill volume with meshes from MeshesToSpawn array' },
  { x: 154, y: 426, w: 219, h: 100, by: 399, t: 'Hit "Simulate" button in editor and wait while physics simulation is going on. Then call this event to save meshes transform' },
  { x: 168, y: 595, w: 260, h: 100, by: 568, t: 'Exit from Play mode and use this event-button to load meshes and set them with correct transform on scene' },
];

const wires = [
  ['exec', 'M200 246H357M425 246H467M522 246H582M613 246C650 246 670 251 709 251M765 251H805M837 251H919M975 251H1002M1034 251H1070M1116 251L1153 250M200 478H235'],
  ['int', 'M522 254H582M765 258H805M975 258H1002'],
  ['int', 'M455 267C462 266 462 255 468 254M433 292C455 292 452 262 468 261M433 292C436 284 424 280 424 273'],
  ['int', 'M688 266C698 266 700 258 711 258M655 310C685 309 685 268 711 266M658 308C662 295 655 285 656 273'],
  ['int', 'M910 262L921 258M902 296C918 292 910 268 921 266M902 288C900 282 878 276 880 269'],
  ['float', 'M364 285C373 287 364 314 373 316M353 324L373 318M395 320C400 313 390 305 391 292M352 324L373 323'],
  ['float', 'M588 303C597 305 588 332 597 334M578 349C588 348 588 336 597 335M616 338C622 331 612 320 616 310'],
  ['float', 'M835 289C844 291 835 318 844 320M824 343C836 340 834 324 844 322M864 324C869 317 858 306 862 296'],
  ['float', 'M1045 305C1055 306 1055 311 1063 312M1056 326C1061 326 1059 319 1063 318'],
  ['bool', 'M1086 315C1120 312 1040 264 1070 259'],
  ['obj', 'M209 504C222 504 224 495 236 495'],
];

const canvas = document.getElementById('canvas');
// node positions are window based, the canvas starts at this point
const ox = 134, oy = 104;

function place(el, n) {
  el.style.left = n.x - ox + 'px';
  el.style.top = n.y - oy + 'px';
  if (n.w) el.style.width = n.w + 'px';
  if (n.h) el.style.height = n.h + 'px';
  canvas.appendChild(el);
}

function el(cls, html) {
  const d = document.createElement('div');
  d.className = cls;
  d.innerHTML = html;
  return d;
}

function pins(list, side) {
  const rows = (list || []).map(p => {
    if (!p) return '<span></span>';
    const [type, label] = p.split(':');
    const [text, value] = label.split('|');
    const cls = type.endsWith('!') ? type.slice(0, -1) + ' hollow' : type;
    return `<span><i class="pin ${cls}"></i>${text}${value ? `<u>${value}</u>` : ''}</span>`;
  });
  return `<div class="pins ${side}">${rows.join('')}</div>`;
}

comments.forEach(c => {
  place(el('comment', `<p>${c.t}</p>`), c);
});

canvas.insertAdjacentHTML('beforeend',
  `<svg class="wires" viewBox="${ox} ${oy} 1028 522">` +
  wires.map(([k, d]) => `<path class="w-${k}" d="${d}"/>`).join('') + '</svg>');

nodes.forEach(n => {
  const small = n.k.startsWith('op') || n.k.startsWith('pill');
  const head = small ? '' : `<div class="node-head">${n.t}${n.s ? `<small>${n.s}</small>` : ''}</div>`;
  const mid = small && n.t ? `<div class="op-label">${n.t.replace('<', '&lt;').replace('\n', '<br>')}</div>` : '';
  place(el('node ' + n.k, `${head}<div class="node-body">${pins(n.i, 'in')}${mid}${pins(n.o, 'out')}</div>`), n);
});

comments.forEach(c => place(el('bubble', c.t), { x: c.x, y: c.by }));
```
